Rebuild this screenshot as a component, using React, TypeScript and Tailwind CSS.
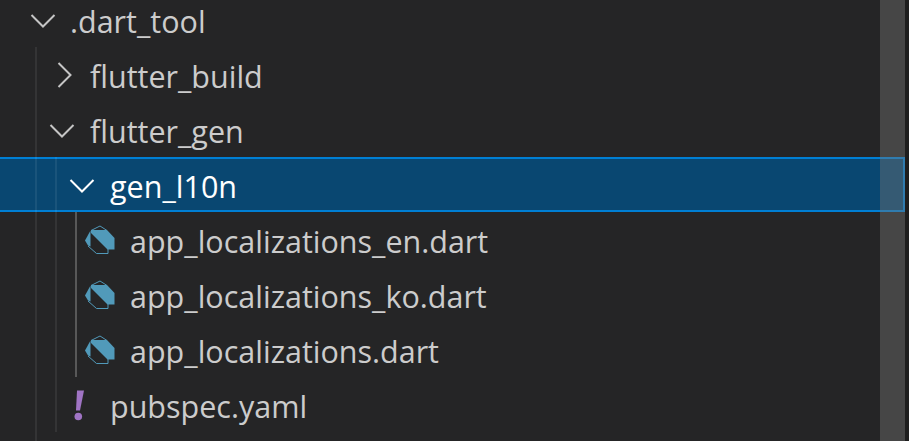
import React from "react";

function Chevron({ open, light }: { open: boolean; light?: boolean }) {
  const color = light ? "#ffffff" : "#c5c5c5";
  return (
    <svg width="26" height="26" viewBox="0 0 26 26" fill="none" className="shrink-0">
      <path
        d={open ? "M1.5 8 L13 19.5 L24.5 8" : "M7.5 1 L19.5 13 L7.5 25"}
        stroke={color}
        strokeWidth="2"
      />
    </svg>
  );
}

function DartIcon() {
  return (
    <svg width="30" height="30" viewBox="0 0 30 30" className="shrink-0">
      <path d="M6 5.5 L15 1 L22 5.5" fill="none" stroke="#519aba" strokeWidth="1" />
      <path d="M6 5 L22 5 L29.5 13 L29.5 24.5 L22.5 24.5 L6 8 Z" fill="#519aba" />
      <path d="M0 15.5 L5.5 5.5 L5.5 21.5 L3 20.5 Z" fill="#519aba" />
      <path d="M3 21 L11.5 28.5 L23 28.5 L23 24" fill="none" stroke="#519aba" strokeWidth="1" />
    </svg>
  );
}

function Label({ children, cls }: { children: React.ReactNode; cls: string }) {
  return <span className={`mt-[2px] whitespace-nowrap text-[30.5px] leading-[40px] ${cls}`}>{children}</span>;
}

export default function App() {
  return (
    <div
      className="relative h-[441px] w-[909px] overflow-hidden bg-[#1e1e1e]"
      style={{ fontFamily: '"Open Sans", "Noto Sans", sans-serif' }}
    >
      <div className="relative h-full w-[905px] bg-[#252526]">
        <div className="flex h-[47px] items-center pb-[8px] pl-[30px]">
          <Chevron open />
          <Label cls="ml-[14px] text-[#cccccc]">.dart_tool</Label>
        </div>
        <div className="flex h-[55px] items-center pl-[51px]">
          <Chevron open={false} />
          <Label cls="ml-[13px] text-[#cccccc]">flutter_build</Label>
        </div>
        <div className="flex h-[55px] items-center pl-[49px]">
          <Chevron open />
          <Label cls="ml-[15px] text-[#cccccc]">flutter_gen</Label>
        </div>
        <div className="flex h-[55px] items-center border-y-2 border-r-2 border-[#007fd4] bg-[#094771] pl-[69px]">
          <Chevron open light />
          <Label cls="ml-[15px] text-white">gen_l10n</Label>
        </div>
        <div className="flex h-[55px] items-center pl-[85px]">
          <DartIcon />
          <Label cls="ml-[15px] text-[#cccccc]">app_localizations_en.dart</Label>
        </div>
        <div className="flex h-[55px] items-center pl-[85px]">
          <DartIcon />
          <Label cls="ml-[15px] text-[#cccccc]">app_localizations_ko.dart</Label>
        </div>
        <div className="flex h-[55px] items-center pl-[85px]">
          <DartIcon />
          <Label cls="ml-[15px] text-[#cccccc]">app_localizations.dart</Label>
        </div>
        <div className="flex h-[55px] items-center pl-[73px]">
          <svg width="14" height="32" viewBox="0 0 14 32" className="shrink-0">
            <path d="M4 1.5 L11 1.5 L7 21.5 L3 21.5 Z" fill="#a074c4" />
            <circle cx="5.3" cy="27.5" r="3.8" fill="#a074c4" />
          </svg>
          <Label cls="ml-[23px] text-[#cccccc]">pubspec.yaml</Label>
        </div>

        <div className="absolute left-[35px] top-[47px] h-[394px] w-[2px] bg-white/[0.07]" />
        <div className="absolute left-[55px] top-[157px] h-[275px] w-[2px] bg-white/[0.07]" />
        <div className="absolute left-[75px] top-[212px] h-[165px] w-[2px] bg-[#585858]" />
        <div className="absolute right-0 top-0 h-full w-[25px] bg-[#79797966]" />
      </div>
    </div>
  );
}
